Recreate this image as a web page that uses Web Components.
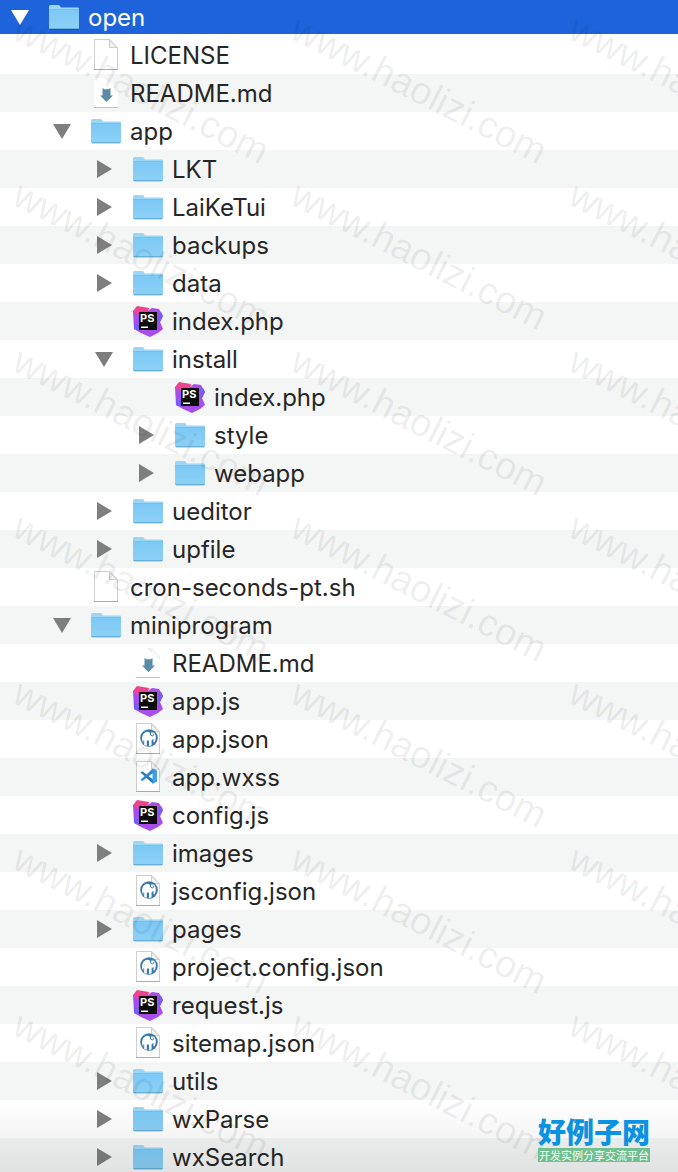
<!DOCTYPE html>
<html lang="en">
<head>
<meta charset="utf-8">
<title>open</title>
<style>
    body {
        margin: 0;
        background: #fff;
        font-family: Inter, "Liberation Sans", sans-serif;
    }
</style>
</head>
<body>

<file-browser>
    <tree-row level="0" icon="folder" open selected>open</tree-row>
    <tree-row level="1" icon="file">LICENSE</tree-row>
    <tree-row level="1" icon="markdown">README.md</tree-row>
    <tree-row level="1" icon="folder" open>app</tree-row>
    <tree-row level="2" icon="folder">LKT</tree-row>
    <tree-row level="2" icon="folder">LaiKeTui</tree-row>
    <tree-row level="2" icon="folder">backups</tree-row>
    <tree-row level="2" icon="folder">data</tree-row>
    <tree-row level="2" icon="storm">index.php</tree-row>
    <tree-row level="2" icon="folder" open>install</tree-row>
    <tree-row level="3" icon="storm">index.php</tree-row>
    <tree-row level="3" icon="folder">style</tree-row>
    <tree-row level="3" icon="folder">webapp</tree-row>
    <tree-row level="2" icon="folder">ueditor</tree-row>
    <tree-row level="2" icon="folder">upfile</tree-row>
    <tree-row level="1" icon="file">cron-seconds-pt.sh</tree-row>
    <tree-row level="1" icon="folder" open>miniprogram</tree-row>
    <tree-row level="2" icon="markdown">README.md</tree-row>
    <tree-row level="2" icon="storm">app.js</tree-row>
    <tree-row level="2" icon="json">app.json</tree-row>
    <tree-row level="2" icon="code">app.wxss</tree-row>
    <tree-row level="2" icon="storm">config.js</tree-row>
    <tree-row level="2" icon="folder">images</tree-row>
    <tree-row level="2" icon="json">jsconfig.json</tree-row>
    <tree-row level="2" icon="folder">pages</tree-row>
    <tree-row level="2" icon="json">project.config.json</tree-row>
    <tree-row level="2" icon="storm">request.js</tree-row>
    <tree-row level="2" icon="json">sitemap.json</tree-row>
    <tree-row level="2" icon="folder">utils</tree-row>
    <tree-row level="2" icon="folder">wxParse</tree-row>
    <tree-row level="2" icon="folder">wxSearch</tree-row>
    <water-mark slot="overlay">www.haolizi.com</water-mark>
    <site-badge slot="overlay">
        好例子网
        <span slot="tagline">开发实例分享交流平台</span>
    </site-badge>
</file-browser>

<script>
const page = `
    <path d="M4.500 .5H20l7.500 8v22h-23z" fill="#fff" stroke="#cfcfcf"/>
    <path d="M4 30.500h24" stroke="#ababab"/>
    <path d="M19.500 1v7.500H27z" fill="#f2f2f2" stroke="#cdcdcd"/>`;

const icons = {
    folder: `
        <path d="M2 28.500h28" stroke="#000" stroke-opacity=".15"/>
        <path d="M1 5.500q0-1.500 1.500-1.500h8q1 0 1.500 1l.8 1.500h17q1.200 0 1.200 1.200V27H1z" fill="#9bd6f7"/>
        <path d="M1 9h30v18q0 1-1 1H2q-1 0-1-1z" fill="url(#f)"/>
        <path d="M1 8.500h30" stroke="#79c0e8"/>
        <path d="M1.500 27.500h29" stroke="#67afd6"/>
        <defs><linearGradient id="f" x2="0" y2="1"><stop stop-color="#7cc9f5"/><stop offset="1" stop-color="#8dd0f6"/></linearGradient></defs>`,
    file: page,
    markdown: `
        <path d="M4 1h16l8 8v22H4z" fill="#fff"/>
        <path d="M4 30.500h24" stroke="#c4c4c4"/>
        <path d="M14 1h6l8 8v4z" fill="#f0f0f0"/>
        <path d="M20 2v7h7z" fill="#fafafa"/>
        <path d="M12.500 11l2 1.300h4l2-1.300v7.500H23L16.500 25 10 18.500h2.500z" fill="#5b8ba6"/>`,
    json: page + `
        <circle cx="17" cy="15" r="8.800" fill="#3a79ad"/>
        <path d="M10.200 17.500q-.7-5 2-7.300 2.300-2 5-1l1.300.8q1-1 2.800-.4 2.500 1.200 2.500 5 0 3-1.300 4.700-.9.600-1-.6v-3q-.7 1.300-1.900 1v5.500q-1.200.8-2.600.8v-5q-1-1.400-2.200 0v4.800q-1.500-.2-2.600-1v-4.300q-.9-.6-.9.800v1.700z" fill="#fff"/>
        <path d="M18.300 9.500q-.6 3.500 2.300 3.300 1.200-.3 1.400-1.800" fill="none" stroke="#3a79ad"/>`,
    code: page + `
        <path d="M8.500 11.500l1.900-1.200L21 18.500V22.700z" fill="#2476b8"/>
        <path d="M8.500 18.800l1.900 1.200L21 12V7.500z" fill="#2f8bd0"/>
        <path d="M20.500 7.500L25 9.500v11.200l-4.500 2z" fill="#3ba0e8"/>`,
    storm: `
        <path d="M1 6l6-1 9 1 4-3 7 1 4 7-3 6 3 7-5 4-8 4-9-4-7-4z" fill="#a94cec"/>
        <path d="M1 6l4-5 12 2-1 5-9 3z" fill="#ee4391"/>
        <path d="M27 7l2 0 2 4-3 6-3 1zM2 17l5 3v6l-5-2z" fill="#7a5cf3"/>
        <path d="M7 7h18v18H7z" fill="#0c0c0c"/>
        <path d="M9 21.500h7v1.500H9z" fill="#fff"/>
        <text x="8" y="17" font-family="Inter, sans-serif" font-size="11" font-weight="700" fill="#fff">PS</text>`
};

class TreeRow extends HTMLElement {

    constructor() {
        super();
        this.shadow = this.attachShadow({mode: 'open'});
    }

    connectedCallback() {
        this.render();
    }

    render() {
        const icon = this.getAttribute('icon');
        const arrow = this.hasAttribute('open') ? 'M1 3h18L10 18z' : 'M3 1v18L18 10z';

        this.style.setProperty('--level', this.getAttribute('level'));
        this.shadow.innerHTML =
        `
        <style>
            :host {
                display: flex;
                flex: none;
                align-items: center;
                box-sizing: border-box;
                height: 38px;
                padding-left: calc(10px + var(--level) * 42px);
                color: #262626;
                font-size: 24px;
                line-height: 32px;
                white-space: nowrap;
            }
            :host([hidden]) {
                display: none;
            }
            :host([selected]) {
                height: 34px;
                margin-bottom: 2px;
                background: #1f63db;
                color: #fff;
            }
            .toggle {
                width: 20px;
                height: 20px;
                margin-right: 18px;
            }
            button {
                display: block;
                padding: 0;
                border: none;
                background: none;
                color: #7e7e7e;
            }
            :host([selected]) button {
                color: #fff;
            }
            svg {
                display: block;
                flex: none;
            }
            .name {
                margin-left: 8px;
                padding-top: 2px;
            }
        </style>
        <div class="toggle">
            ${icon === 'folder' ? `
            <button type="button" aria-label="Toggle folder" aria-expanded="${this.hasAttribute('open')}">
                <svg width="20" height="20" viewBox="0 0 20 20"><path d="${arrow}" fill="currentColor"/></svg>
            </button>` : ''}
        </div>
        <svg width="32" height="32" viewBox="0 0 32 32" aria-hidden="true">${icons[icon]}</svg>
        <span class="name"><slot></slot></span>
        `;

        const button = this.shadow.querySelector('button');
        if (button) {
            button.addEventListener('click', () => {
                this.toggleAttribute('open');
                this.render();
                this.dispatchEvent(new CustomEvent('row-toggle', {bubbles: true}));
            });
        }
    }
}

class FileBrowser extends HTMLElement {

    constructor() {
        super();
        this.shadow = this.attachShadow({mode: 'open'});
        this.render();
        this.addEventListener('row-toggle', () => this.update());
    }

    connectedCallback() {
        this.update();
    }

    // hide what sits under a closed folder and stripe the rows that are left
    update() {
        let closedAt = Infinity;
        let count = 0;
        this.querySelectorAll('tree-row').forEach(row => {
            const level = Number(row.getAttribute('level'));
            if (level <= closedAt) closedAt = Infinity;
            row.hidden = level > closedAt;
            if (row.hidden) return;
            if (row.getAttribute('icon') === 'folder' && !row.hasAttribute('open')) closedAt = level;
            row.classList.toggle('striped', count > 0 && count % 2 === 0);
            count++;
        });
    }

    render() {
        this.shadow.innerHTML =
        `
        <style>
            :host {
                display: block;
                position: relative;
                height: 100vh;
                overflow: hidden;
            }
            .rows {
                display: flex;
                flex-direction: column;
                height: 100%;
                overflow-y: auto;
                scrollbar-width: none;
            }
            ::slotted(.striped) {
                background: #f4f5f5;
            }
            .fade {
                position: absolute;
                inset: auto 0 0 0;
                height: 72px;
                background: linear-gradient(transparent, rgba(0, 0, 0, .08));
                pointer-events: none;
            }
        </style>
        <div class="rows"><slot></slot></div>
        <div class="fade"></div>
        <slot name="overlay"></slot>
        `;
    }
}

class WaterMark extends HTMLElement {

    constructor() {
        super();
        this.shadow = this.attachShadow({mode: 'open'});
    }

    connectedCallback() {
        const text = this.textContent;
        this.shadow.innerHTML =
        `
        <style>
            :host {
                position: absolute;
                inset: 0;
                overflow: hidden;
                pointer-events: none;
                color: rgba(0, 0, 0, .075);
                font-family: "Liberation Sans", sans-serif;
                font-size: 38px;
                line-height: 40px;
            }
            .tiles {
                display: grid;
                grid-template-columns: repeat(3, 278px);
                grid-auto-rows: 166px;
            }
            span {
                padding-left: 8px;
                white-space: nowrap;
                transform: rotate(27deg);
                transform-origin: 0 40px;
            }
        </style>
        <div class="tiles">${`<span>${text}</span>`.repeat(21)}</div>
        `;
    }
}

class SiteBadge extends HTMLElement {

    constructor() {
        super();
        this.shadow = this.attachShadow({mode: 'open'});
        this.shadow.innerHTML =
        `
        <style>
            :host {
                position: absolute;
                right: 28px;
                bottom: 10px;
                font-family: "Noto Sans CJK SC", sans-serif;
                text-align: center;
                white-space: nowrap;
            }
            .title {
                color: #0b92e0;
                font-size: 28px;
                font-weight: 900;
                line-height: 34px;
            }
            .tagline {
                background: #6fbf90;
                color: #f4fff8;
                font-size: 11px;
                line-height: 14px;
            }
        </style>
        <div class="title"><slot></slot></div>
        <div class="tagline"><slot name="tagline"></slot></div>
        `;
    }
}

customElements.define('tree-row', TreeRow);
customElements.define('file-browser', FileBrowser);
customElements.define('water-mark', WaterMark);
customElements.define('site-badge', SiteBadge);
</script>
</body>
</html>
